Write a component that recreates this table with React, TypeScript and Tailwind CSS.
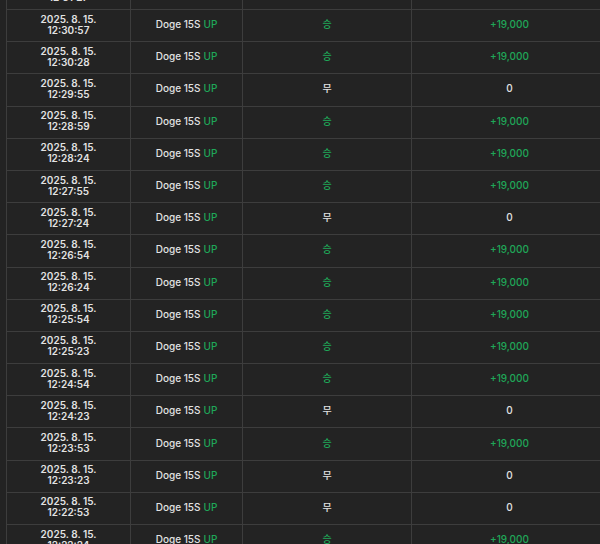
type Row = { time: string; win: boolean };

const rows: Row[] = [
  { time: "12:31:27", win: true },
  { time: "12:30:57", win: true },
  { time: "12:30:28", win: true },
  { time: "12:29:55", win: false },
  { time: "12:28:59", win: true },
  { time: "12:28:24", win: true },
  { time: "12:27:55", win: true },
  { time: "12:27:24", win: false },
  { time: "12:26:54", win: true },
  { time: "12:26:24", win: true },
  { time: "12:25:54", win: true },
  { time: "12:25:23", win: true },
  { time: "12:24:54", win: true },
  { time: "12:24:23", win: false },
  { time: "12:23:53", win: true },
  { time: "12:23:23", win: false },
  { time: "12:22:53", win: false },
  { time: "12:22:24", win: true },
];

const HistoryRow = ({ row }: { row: Row }) => {
  return (
    <div className="flex h-[32.19px] border-b border-[#3d3d3d]">
      <div className="flex w-[124px] shrink-0 flex-col items-center justify-center border-r border-[#3d3d3d] pb-[2px] text-[10px] font-semibold leading-[11px] text-[#e2e2e2]">
        <span>2025. 8. 15.</span>
        <span>{row.time}</span>
      </div>
      <div className="flex w-[112px] shrink-0 items-center justify-center border-r border-[#3d3d3d] pb-[2px] text-[10px] font-medium text-[#e2e2e2]">
        Doge 15S<span className="ml-[3px] text-[#1fa758]">UP</span>
      </div>
      <div className="flex w-[169px] shrink-0 items-center justify-center border-r border-[#3d3d3d] pb-[2px] text-[10px] font-medium">
        {row.win ? (
          <span className="text-[#1fa758]">승</span>
        ) : (
          <span className="text-[#e2e2e2]">무</span>
        )}
      </div>
      <div className="flex w-[195px] shrink-0 items-center justify-center pb-[2px] text-[10px] font-medium">
        {row.win ? (
          <span className="text-[#1fa758]">+19,000</span>
        ) : (
          <span className="text-[#e2e2e2]">0</span>
        )}
      </div>
    </div>
  );
};

const App = () => {
  return (
    <div
      className="h-[544px] w-[600px] overflow-hidden bg-[#232323] pl-[6px]"
      style={{ fontFamily: 'Inter, "Noto Sans CJK KR", sans-serif' }}
    >
      <div className="-mt-[22.2px] w-[601px] border-l border-[#3d3d3d]">
        {rows.map((row, i) => (
          <HistoryRow key={i} row={row} />
        ))}
      </div>
    </div>
  );
};

export default App;
